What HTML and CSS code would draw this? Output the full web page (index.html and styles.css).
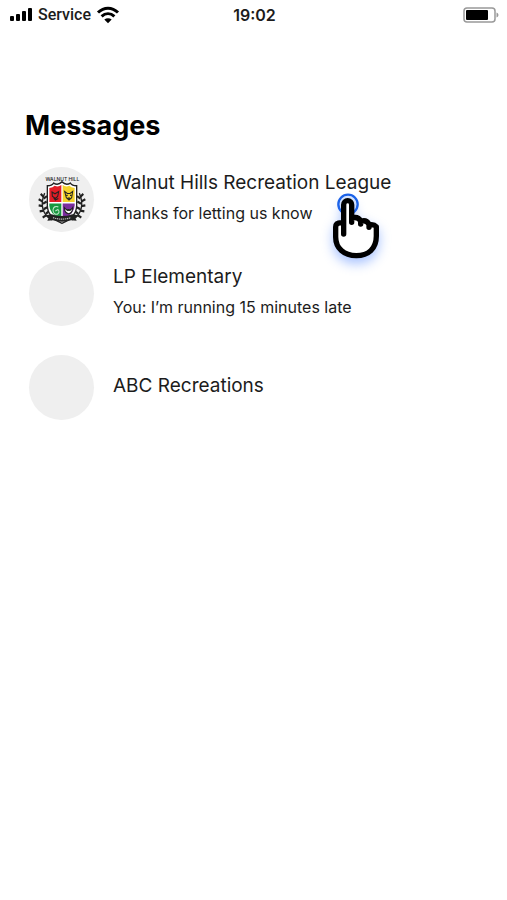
FILE: index.html
```html
<!DOCTYPE html>
<html lang="en">
<head>
    <meta charset="UTF-8">
    <meta name="viewport" content="width=device-width, initial-scale=1.0">
    <title>Messages</title>
    <link rel="stylesheet" href="styles.css">
</head>
<body>
    <header class="status-bar">
        <div class="carrier">
            <svg class="signal" viewBox="0 0 23 13" aria-hidden="true">
                <rect x="0" y="8" width="4" height="5" rx="1"/>
                <rect x="6" y="6" width="4" height="7" rx="1"/>
                <rect x="12" y="3" width="4" height="10" rx="1"/>
                <rect x="18" y="0" width="4" height="13" rx="1"/>
            </svg>
            <span class="carrier-name">Service</span>
            <svg class="wifi" viewBox="0 0 24 18" aria-hidden="true">
                <path d="M2 6.500C8 .8 16 .8 22 6.500M5.600 10.400c3.800-3.400 9-3.400 12.800 0" fill="none" stroke="#000" stroke-width="3"/>
                <path d="M12 17.200l-3.700-3.600c2.200-1.800 5.200-1.800 7.400 0z"/>
            </svg>
        </div>
        <time class="clock">19:02</time>
        <svg class="battery" viewBox="0 0 36 16" aria-hidden="true">
            <rect x="1" y="1" width="31" height="14" rx="3" fill="#fff" stroke="#999" stroke-width="1.5"/>
            <rect x="3" y="3" width="22" height="10" rx="1"/>
            <path d="M33.500 5.500c2.600.8 2.600 4.200 0 5z" fill="#999"/>
        </svg>
    </header>

    <main class="inbox">
        <h1>Messages</h1>
        <ul class="conversations">
            <li>
                <a class="conversation" href="#walnut-hills">
                    <span class="avatar">
                        <svg class="crest" viewBox="0 0 144 162" aria-hidden="true">
                            <g transform="translate(0 5) scale(1 1.150)">
                                <g fill="none" stroke="#222" stroke-width="4">
                                    <path d="M20 48C6 76 12 104 42 118M124 48c14 28 8 56-22 70"/>
                                    <path d="M17 58L8 50M14 70L2 64M14 82L2 80M17 94L5 96M25 106l-11 6M17 62l10-6M15 76l11-6M17 90l11-5M24 102l9-7M127 58l9-8M130 70l12-6M130 82l12-2M127 94l12 2M119 106l11 6M127 62l-10-6M129 76l-11-6M127 90l-11-5M120 102l-9-7" stroke-width="6"/>
                                </g>
                                <path d="M28 29q14 0 19-7 13 7 25-3 12 10 25 3 5 7 19 7v51q0 31-44 47-44-16-44-47z" fill="#fff" stroke="#222" stroke-width="4"/>
                                <path d="M34 35q11-1 16-6 11 4 20-2v44H34z" fill="#e11d26"/>
                                <path d="M74 27q9 6 20 2 5 5 16 6v36H74z" fill="#f4d22b"/>
                                <path d="M34 75h36v42Q34 103 34 80z" fill="#17973f"/>
                                <path d="M74 75h36v5q0 23-36 37z" fill="#7b2d9e"/>
                                <g fill="none" stroke="#222" stroke-width="3">
                                    <path d="M42 45l9 5 11-6-3 13-7 5-9-6zM47 60l5 6 9-4M80 44l8 5h8l8-5-3 16-8 6-8-6zM85 54h4M96 54h4M89 61h7"/>
                                    <path d="M61 84q-14-4-16 8 1 13 13 11 9-5 2-12l-8 4" stroke="#bfe6c8"/>
                                    <path d="M79 86q7 8 13 5 6 3 12-5-1 15-12 16-12-1-13-16z" fill="#fff"/>
                                    <path d="M86 93h12"/>
                                </g>
                                <path d="M24 106l17-3q31 10 62 0l17 3-8 7 4 7-17-1q-27 8-54 0l-17 1 4-7z" fill="#222"/>
                                <path d="M45 112q27 8 54 0" fill="none" stroke="#bbb" stroke-width="3" stroke-dasharray="4 2"/>
                            </g>
                            <text x="73" y="25" text-anchor="middle" class="crest-name">WALNUT HILL</text>
                        </svg>
                    </span>
                    <span class="summary">
                        <span class="name">Walnut Hills Recreation League</span>
                        <span class="preview">Thanks for letting us know</span>
                    </span>
                </a>
                <svg class="tap-hand" viewBox="0 0 240 330" aria-hidden="true">
                    <circle cx="84" cy="118" r="29" fill="#dbe8ff" stroke="#1b62e8" stroke-width="7"/>
                    <path class="hand" d="M71 207V119a12 12 0 0 1 24 0v53-13q19-6 27 9v9-8q17-6 25 9v9-7q14-4 22 5v28c0 38-24 59-60 59-37 0-62-22-62-56v-30q0-13 17-13"/>
                </svg>
            </li>
            <li>
                <a class="conversation" href="#lp-elementary">
                    <span class="avatar"></span>
                    <span class="summary">
                        <span class="name">LP Elementary</span>
                        <span class="preview">You: I’m running 15 minutes late</span>
                    </span>
                </a>
            </li>
            <li>
                <a class="conversation" href="#abc-recreations">
                    <span class="avatar"></span>
                    <span class="summary">
                        <span class="name">ABC Recreations</span>
                    </span>
                </a>
            </li>
        </ul>
    </main>
</body>
</html>
```

FILE: styles.css
```css
* { margin: 0; padding: 0; box-sizing: border-box; }

body {
    font-family: Inter, "Liberation Sans", sans-serif;
    background: #fff;
    color: #1c1c1c;
    min-height: 100vh;
}

.status-bar {
    display: grid;
    grid-template-columns: 1fr auto 1fr;
    align-items: center;
    height: 29px;
    padding: 0 8px 0 10px;
    font-size: 16px;
    line-height: 20px;
}

.carrier {
    display: flex;
    align-items: center;
    gap: 5px;
}

.carrier-name {
    font-family: Roboto, sans-serif;
    font-weight: 500;
}

.signal {
    width: 23px;
    height: 13px;
}

.wifi {
    width: 24px;
    height: 18px;
}

.clock {
    font-weight: 600;
}

.battery {
    width: 36px;
    height: 16px;
    justify-self: end;
}

.inbox {
    padding: 80px 25px 24px;
}

.inbox h1 {
    font-size: 27px;
    line-height: 34px;
    color: #000;
}

.conversations {
    display: grid;
    gap: 29px;
    margin-top: 24px;
    padding-left: 4px;
    list-style: none;
}

.conversations li {
    position: relative;
}

.conversation {
    display: flex;
    align-items: center;
    gap: 19px;
    color: inherit;
    text-decoration: none;
}

.avatar {
    display: flex;
    align-items: center;
    justify-content: center;
    flex: none;
    width: 65px;
    height: 65px;
    border-radius: 50%;
    background: #efefef;
}

.crest {
    width: 48px;
    height: 54px;
}

.crest-name {
    font-size: 15px;
    font-weight: 500;
    fill: #222;
}

.summary {
    display: grid;
    gap: 6px;
    padding-bottom: 4px;
}

.name {
    font-size: 19px;
    line-height: 25px;
}

.preview {
    font-size: 16px;
    line-height: 24px;
}

/* pointer lying over the first conversation */
.tap-hand {
    position: absolute;
    top: -2px;
    left: 291px;
    width: 80px;
    height: 110px;
    overflow: visible;
    pointer-events: none;
}

.hand {
    fill: #fff;
    stroke: #000;
    stroke-width: 16px;
    stroke-linecap: round;
    stroke-linejoin: round;
    filter: drop-shadow(0 16px 18px rgba(60, 120, 255, 0.45));
}
```
